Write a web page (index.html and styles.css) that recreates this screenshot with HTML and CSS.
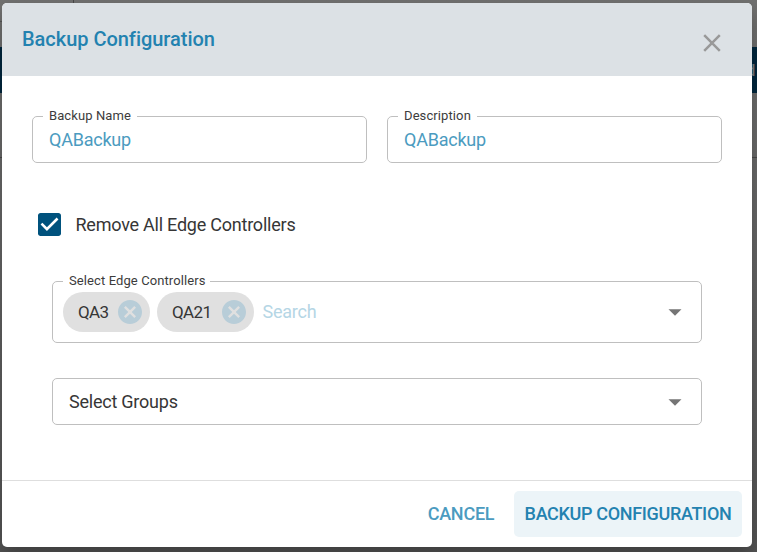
FILE: index.html
```html
<!DOCTYPE html>
<html lang="en">
<head>
<meta charset="utf-8">
<title>Backup Configuration</title>
<link rel="stylesheet" href="styles.css">
</head>
<body>
<div class="page" aria-hidden="true">
  <div class="page-tabs"></div>
  <div class="page-bar"></div>
  <div class="page-table-head"><span class="page-cell">d</span></div>
  <div class="page-row"></div>
</div>
<main class="dialog">
  <header class="dialog-header">
    <h1 class="dialog-title">Backup Configuration</h1>
    <svg class="close" viewBox="0 0 18 18"><path d="M1.2 1.2 16.8 16.8M16.8 1.2 1.2 16.8"/></svg>
  </header>
  <section class="dialog-body">
    <div class="field-row">
      <div class="field"><label class="label label-name">Backup Name</label><span class="value">QABackup</span></div>
      <div class="field"><label class="label label-desc">Description</label><span class="value">QABackup</span></div>
    </div>
    <div class="check-row">
      <svg class="checkbox" viewBox="3 3 18 18"><path fill="#00527d" d="M19 3H5c-1.110 0-2 .9-2 2v14c0 1.100.89 2 2 2h14c1.110 0 2-.9 2-2V5c0-1.100-.89-2-2-2zm-9 14l-5-5 1.410-1.410L10 14.170l7.590-7.590L19 8l-9 9z"/></svg>
      <span class="check-text">Remove All Edge Controllers</span>
    </div>
    <div class="field select select-chips">
      <label class="label label-edge">Select Edge Controllers</label>
      <span class="chip chip-first"><span class="chip-text">QA3</span><svg class="chip-x" viewBox="2 2 20 20"><path d="M12 2C6.470 2 2 6.470 2 12s4.470 10 10 10 10-4.470 10-10S17.530 2 12 2zm5 13.590L15.590 17 12 13.410 8.410 17 7 15.590 10.590 12 7 8.410 8.410 7 12 10.590 15.590 7 17 8.410 13.410 12 17 15.590z"/></svg></span>
      <span class="chip"><span class="chip-text">QA21</span><svg class="chip-x" viewBox="2 2 20 20"><path d="M12 2C6.470 2 2 6.470 2 12s4.470 10 10 10 10-4.470 10-10S17.530 2 12 2zm5 13.590L15.590 17 12 13.410 8.410 17 7 15.590 10.590 12 7 8.410 8.410 7 12 10.590 15.590 7 17 8.410 13.410 12 17 15.590z"/></svg></span>
      <span class="search">Search</span>
      <svg class="arrow" viewBox="0 0 14 7"><path d="M.5.3h13L7 6.800z"/></svg>
    </div>
    <div class="field select select-groups">
      <span class="select-text">Select Groups</span>
      <svg class="arrow" viewBox="0 0 14 7"><path d="M.5.3h13L7 6.800z"/></svg>
    </div>
  </section>
  <footer class="dialog-footer">
    <button class="button cancel">CANCEL</button>
    <button class="button submit">BACKUP CONFIGURATION</button>
  </footer>
</main>
</body>
</html>
```
FILE: styles.css
```css
* { box-sizing: border-box; }
body {
  margin: 0;
  width: 757px;
  height: 552px;
  overflow: hidden;
  display: grid;
  background: linear-gradient(#70706f, #666 40%, #545454);
  font-family: Roboto, sans-serif;
  font-size: 18px;
  letter-spacing: -.23px;
  color: #363636;
}
.page, .dialog { grid-area: 1 / 1; }
.page-tabs { width: 74px; height: 22px; border-right: 1px solid #484848; border-bottom: 1px solid #555; }
.page-bar { height: 25px; }
.page-table-head { height: 46px; background: #00263d; display: flex; justify-content: flex-end; align-items: center; padding-right: 2px; }
.page-cell { font-size: 16px; font-weight: 500; color: #777b7d; }
.page-row { height: 65px; border-bottom: 1px solid #484848; }

.dialog {
  position: relative;
  margin: 3px 5px 5px 2px;
  display: flex;
  flex-direction: column;
  background: #fff;
  border-radius: 5px;
  overflow: hidden;
  box-shadow: 0 10px 18px rgba(0, 0, 0, .25);
}
.dialog-header {
  height: 73px;
  background: #dce1e5;
  display: flex;
  justify-content: space-between;
  padding: 0 31px 0 20px;
}
.dialog-title { margin: 0; font-size: 20px; line-height: 73px; height: 73px; font-weight: 500; letter-spacing: -.03px; color: #2382b0; }
.close { width: 18px; height: 18px; margin-top: 31px; stroke: #999; stroke-width: 2.500; fill: none; }
.dialog-body { height: 404px; padding: 40px 30px 0; }
.field-row { display: grid; grid-template-columns: 335px 335px; column-gap: 20px; }
.field {
  position: relative;
  height: 47px;
  border: 1px solid #bfbfbf;
  border-radius: 5px;
  display: flex;
  align-items: center;
  padding: 0 19px 0 16px;
}
.label {
  position: absolute;
  top: -9px;
  left: 10px;
  padding: 0 6px;
  background: #fff;
  font-size: 13px;
  line-height: 16px;
  letter-spacing: .1px;
  white-space: nowrap;
  color: #3c3c3c;
}
.label-name { width: 94px; }
.label-desc { width: 79px; }
.label-edge { width: 147px; }
.value { color: #4b9bc0; }
.check-row { display: flex; align-items: center; height: 24px; margin: 49px 0 0 5px; }
.checkbox { width: 23px; height: 23px; margin: 0 15px 0 .5px; }
.select { width: 650px; margin-left: 20px; }
.select-chips { height: 62px; margin-top: 45px; padding-left: 10px; }
.select-groups { margin-top: 35px; }
.chip {
  height: 40px;
  border-radius: 20px;
  background: #e0e0e0;
  display: flex;
  align-items: center;
  justify-content: space-between;
  width: 97px;
  padding: 0 8px 0 15px;
  font-size: 17px;
  letter-spacing: -.6px;
}
.chip-text { padding-bottom: 1px; }
.chip-first { width: 87px; margin-right: 7px; }
.chip-x { width: 24px; height: 24px; fill: #b8cdd8; }
.search { margin-left: 8.500px; padding-bottom: 2px; color: #b5d6e5; }
.arrow { width: 14px; height: 7px; margin-left: auto; fill: #757575; }
.select-groups .arrow { margin-top: 2px; }
.dialog-footer {
  height: 67px;
  border-top: 1px solid #dedede;
  display: flex;
  align-items: center;
  justify-content: flex-end;
  padding-right: 10px;
}
.button {
  height: 46px;
  border: 0;
  border-radius: 5px;
  padding: 0 0 2px;
  background: none;
  font-family: inherit;
  font-size: 18px;
  font-weight: 500;
  letter-spacing: -.33px;
  white-space: nowrap;
}
.cancel { width: 86px; margin-right: 10px; letter-spacing: -.25px; color: #4b9bc0; }
.submit { width: 228px; background: #ecf4f8; color: #2382b0; }
```
